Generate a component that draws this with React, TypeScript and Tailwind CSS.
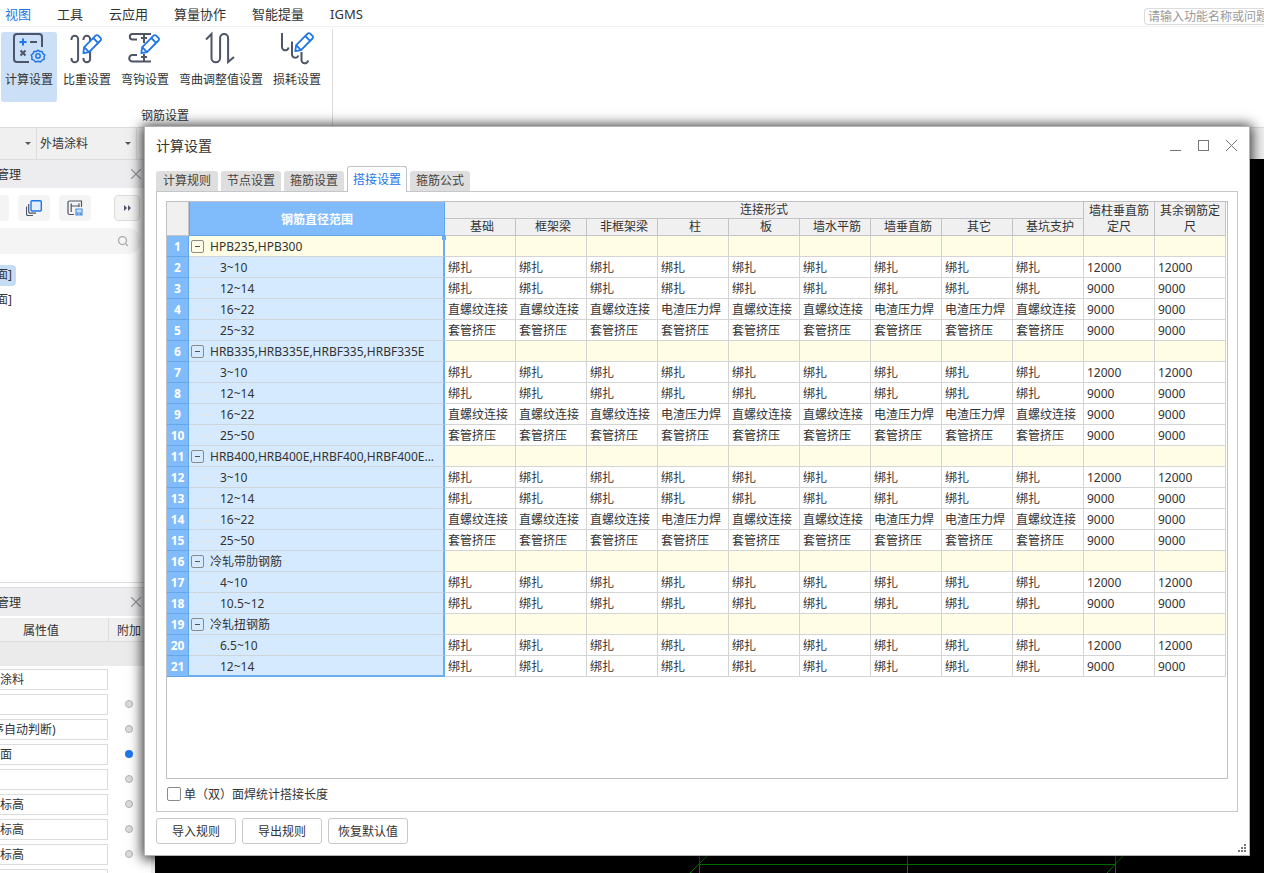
import React, { useState } from "react";
import { Search, X } from "lucide-react";
import clsx from "clsx";

const MENUS = ["视图", "工具", "云应用", "算量协作", "智能提量", "IGMS"];
const TABS = ["计算规则", "节点设置", "箍筋设置", "搭接设置", "箍筋公式"];
const COLUMNS = ["基础", "框架梁", "非框架梁", "柱", "板", "墙水平筋", "墙垂直筋", "其它", "基坑支护"];

const TIE = "绑扎";
const THREAD = "直螺纹连接";
const SLAG = "电渣压力焊";
const SLEEVE = "套管挤压";

const tied = Array(9).fill(TIE) as string[];
const sleeved = Array(9).fill(SLEEVE) as string[];
const mixed = [THREAD, THREAD, THREAD, SLAG, THREAD, THREAD, SLAG, SLAG, THREAD];

interface Row {
  name: string;
  group?: boolean;
  last?: boolean;
  joints?: string[];
  length?: string;
}

const ROWS: Row[] = [
  { name: "HPB235,HPB300", group: true },
  { name: "3~10", joints: tied, length: "12000" },
  { name: "12~14", joints: tied, length: "9000" },
  { name: "16~22", joints: mixed, length: "9000" },
  { name: "25~32", joints: sleeved, length: "9000", last: true },
  { name: "HRB335,HRB335E,HRBF335,HRBF335E", group: true },
  { name: "3~10", joints: tied, length: "12000" },
  { name: "12~14", joints: tied, length: "9000" },
  { name: "16~22", joints: mixed, length: "9000" },
  { name: "25~50", joints: sleeved, length: "9000", last: true },
  { name: "HRB400,HRB400E,HRBF400,HRBF400E...", group: true },
  { name: "3~10", joints: tied, length: "12000" },
  { name: "12~14", joints: tied, length: "9000" },
  { name: "16~22", joints: mixed, length: "9000" },
  { name: "25~50", joints: sleeved, length: "9000", last: true },
  { name: "冷轧带肋钢筋", group: true },
  { name: "4~10", joints: tied, length: "12000" },
  { name: "10.5~12", joints: tied, length: "9000", last: true },
  { name: "冷轧扭钢筋", group: true },
  { name: "6.5~10", joints: tied, length: "12000" },
  { name: "12~14", joints: tied, length: "9000", last: true },
];

const PROPS = [
  { value: "涂料" },
  { value: "", dot: "off" },
  { value: "序自动判断)", dot: "off", clipped: true },
  { value: "面", dot: "on" },
  { value: "", dot: "off" },
  { value: "标高", dot: "off" },
  { value: "标高", dot: "off" },
  { value: "标高", dot: "off" },
  { value: "", dot: "" },
];

function IconFrame({ children }: { children: React.ReactNode }) {
  return (
    <svg width="32" height="32" viewBox="0 0 32 32" fill="none" stroke="#4d5566" strokeWidth="2" className="overflow-visible" aria-hidden="true">
      {children}
    </svg>
  );
}

function Pencil({ transform }: { transform?: string }) {
  return (
    <g transform={transform} stroke="#1f76e8" strokeWidth="1.8" strokeLinejoin="round">
      <path d="M12.3 21.2l.9-6L24.6 3.6a1.8 1.8 0 0 1 2.600 0l2.300 2.300a1.8 1.8 0 0 1 0 2.600L18 20.200z" fill="#fff" />
      <path d="M22.300 6l4.800 4.800M13.200 15.200l4.800 5" />
    </g>
  );
}

const TOOLS = [
  {
    label: "计算设置",
    icon: (
      <IconFrame>
        <path d="M16 30H4a3 3 0 0 1-3-3V5a3 3 0 0 1 3-3h22a3 3 0 0 1 3 3v10" />
        <path d="M17 10h7" />
        <path d="M7.5 18.5l5 5M12.5 18.5l-5 5" />
        <path d="M10 6.5v7M6.5 10h7" stroke="#1f76e8" />
        <g stroke="#1f76e8" strokeWidth="1.5" strokeLinejoin="round">
          <path d="M25 18.2l1.8 1.4 2.3-.2.8 2.2 1.9 1.4-.8 2 .2 2.4-2.2.7-1.4 1.8-2.6-.6-2.6.6-1.4-1.8-2.2-.7.2-2.4-.8-2 1.9-1.4.8-2.2 2.3.2z" />
          <circle cx="25" cy="24" r="2.2" />
        </g>
      </IconFrame>
    ),
  },
  {
    label: "比重设置",
    icon: (
      <IconFrame>
        <path d="M.5 8V7a3.3 3.3 0 0 1 6.6 0v20a3.3 3.3 0 0 1-6.6 0v-1M12.500 8V7a3.3 3.3 0 0 1 6.600 0v20a3.3 3.3 0 0 1-6.600 0v-1" />
        <Pencil />
      </IconFrame>
    ),
  },
  {
    label: "弯钩设置",
    icon: (
      <IconFrame>
        <path d="M22 2H3.5a2.7 2.7 0 0 0 0 5.4H8M22 29.5H3.5a3.3 3.3 0 0 1 0-6.6H8M15 2v9M12 6h6M15 22v7.5M12 25h6" />
        <Pencil />
      </IconFrame>
    ),
  },
  {
    label: "弯曲调整值设置",
    icon: (
      <IconFrame>
        <path d="M1 7.5L6.500 2v24a4.300 4.300 0 0 0 8.600 0V6a4 4 0 0 1 8 0v24L29 25" />
      </IconFrame>
    ),
  },
  {
    label: "损耗设置",
    icon: (
      <IconFrame>
        <path d="M1 1v13.5a3.3 3.3 0 0 0 6.600 1M11 9.500v13a3.3 3.3 0 0 0 6.400 1M20.500 20v7.500a3.3 3.3 0 0 0 6.600 1" />
        <Pencil transform="translate(2 -2)" />
      </IconFrame>
    ),
  },
];

function PanelTitle({ title }: { title: string }) {
  return (
    <div className="flex h-7 items-center justify-between bg-[#ededf0] pr-1.5">
      <span className="-ml-[3px] pt-0.5">{title}</span>
      <button aria-label="关闭面板" className="text-[#999]">
        <X size={18} strokeWidth={1.5} />
      </button>
    </div>
  );
}

function Ribbon() {
  return (
    <header className="h-[127px] shrink-0">
      <div className="flex h-[27px] items-center justify-between border-b border-[#f0f0f0] pl-[5px]">
        <nav className="flex gap-[26px] pt-0.5 text-[13px] leading-5">
          {MENUS.map((m, i) => (
            <button key={m} className={i === 0 ? "text-[#1f76e8]" : ""}>{m}</button>
          ))}
        </nav>
        <input
          aria-label="搜索功能"
          placeholder="请输入功能名称或问题"
          className="mt-1.5 h-[17px] w-[120px] rounded-l-sm border border-r-0 border-[#dcdcdc] pl-[3px] placeholder:text-[#999]"
        />
      </div>
      <div className="mt-0.5 flex w-[333px] flex-col border-r border-[#dcdcdc] pt-[3px]">
        <div className="flex gap-0.5 pl-px">
          {TOOLS.map((t, i) => (
            <button key={t.label} className={clsx("flex h-[70px] flex-col items-center rounded-[3px] px-1", i === 0 && "bg-[#cbdff7]")}>
              {t.icon}
              <span className="mt-1.5 leading-5">{t.label}</span>
            </button>
          ))}
        </div>
        <div className="mt-1 pr-0.5 text-center leading-5">钢筋设置</div>
      </div>
    </header>
  );
}

function SidePanel() {
  return (
    <aside className="flex w-[155px] shrink-0 flex-col border-r-4 border-[#f0f0f0] bg-white">
      <div className="flex h-[33px] shrink-0 border-y border-[#dcdcdc] bg-[#f0f0f0]">
        <button aria-label="楼层" className="flex w-[37px] items-center justify-end border-r border-[#dcdcdc] pr-[5px]">
          <span className="border-x-3 border-t-3 border-x-transparent border-t-[#555]" />
        </button>
        <button className="flex w-[100px] items-center justify-between border-r border-[#dcdcdc] pr-[5px] pl-[3px]">
          外墙涂料
          <span className="border-x-3 border-t-3 border-x-transparent border-t-[#555]" />
        </button>
      </div>
      <PanelTitle title="管理" />
      <div className="flex h-10 items-center">
        <button aria-label="新建" className="h-[26px] w-[9px] rounded-r bg-[#f4f4f4]" />
        <button aria-label="复制" className="ml-[9px] flex h-[26px] w-8 items-center justify-center rounded bg-[#f4f4f4]">
          <svg width="16" height="16" viewBox="0 0 16 16" fill="none" aria-hidden="true">
            <path d="M.5 6.500V14a1.500 1.500 0 0 0 1.500 1.500h5M2.700 4v7.700a1.500 1.500 0 0 0 1.500 1.500H10" stroke="#4d5566" strokeWidth="1.200" />
            <rect x="5" y=".7" width="10.300" height="10.300" rx="1" fill="#e3effc" stroke="#1f76e8" strokeWidth="1.400" />
          </svg>
        </button>
        <button aria-label="构件存盘" className="ml-[9px] flex h-[26px] w-8 items-center justify-center rounded bg-[#f4f4f4]">
          <svg width="16" height="16" viewBox="0 0 16 16" fill="none" stroke="#4d5566" strokeWidth="1.200" aria-hidden="true">
            <path d="M7 14.500H2.500A1.500 1.500 0 0 1 1 13V2.500A1.500 1.500 0 0 1 2.500 1h12v6M4.200 3.500V12M4.200 6h8M12 3.500V7" />
            <path d="M9 9h6v6H9zM10.500 13h3v2h-3z" stroke="#4a8fe8" fill="#cfe1f8" />
          </svg>
        </button>
        <button aria-label="更多" className="ml-[23px] flex h-[26px] w-[26px] items-center justify-center gap-px rounded border border-[#dcdcdc] bg-[#f4f4f4]">
          <span className="border-y-3 border-l-3 border-y-transparent border-l-[#4d5566]" />
          <span className="border-y-3 border-l-3 border-y-transparent border-l-[#4d5566]" />
        </button>
      </div>
      <label className="flex h-[26px] w-[141px] shrink-0 items-center rounded-r-full bg-[#f4f4f4] pr-3">
        <input aria-label="搜索构件" className="min-w-0 flex-1 bg-transparent" />
        <Search size={12} strokeWidth={2.5} className="text-[#a8a8a8]" />
      </label>
      <ul className="flex flex-1 flex-col items-start gap-1 border-b border-[#dcdcdc] pt-[11px] -indent-1 leading-5">
        <li className="h-[21px] rounded-r bg-[#c5dcf5] pr-1">面]</li>
        <li className="h-[21px]">面]</li>
      </ul>
      <div className="mt-1 h-[286px] shrink-0 overflow-hidden border-t border-[#dcdcdc]">
        <PanelTitle title="管理" />
        <div className="mt-0.5 flex h-6 items-center border-b border-[#dcdcdc] bg-[#f0f0f0]">
          <span className="flex h-full w-[109px] items-center border-r border-[#dcdcdc] pt-0.5 pl-[23px]">属性值</span>
          <span className="pt-0.5 pl-2">附加</span>
        </div>
        <div className="h-6 bg-[#ebebeb]" />
        <div className="mt-[3px] flex flex-col gap-1">
          {PROPS.map((p, i) => (
            <div key={i} className="flex h-[21px] shrink-0 items-center">
              <input
                aria-label={`属性 ${i + 1}`}
                defaultValue={p.value}
                className={clsx("h-[21px] w-[108px] border border-l-0 border-[#dcdcdc] pb-0.5", p.clipped && "-indent-2")}
              />
              {p.dot && (
                <button
                  aria-label="附加属性"
                  className={clsx("mb-0.5 ml-[17px] size-2 rounded-full", p.dot === "on" ? "bg-[#1f76e8]" : "border border-[#b4b4b8] bg-[#dcdcdf]")}
                />
              )}
            </div>
          ))}
        </div>
      </div>
    </aside>
  );
}

function Viewport() {
  return (
    <main className="flex min-w-0 flex-1 flex-col overflow-hidden bg-black">
      <div className="h-8 border-t border-[#dcdcdc] bg-[#f0f0f0]" />
      <svg width="440" height="20" viewBox="0 0 440 20" className="mt-auto ml-[532px] shrink-0" stroke="#008000" aria-hidden="true">
        <path d="M12.500 0v20M220.500 0v20M428.500 0v20M12 11.500h417M3 20L22 1M420 20l18-19" fill="none" />
      </svg>
    </main>
  );
}

function NameCell({ row, active }: { row: Row; active: boolean }) {
  return (
    <td className={clsx("relative border-r-2 border-b border-r-[#6aaeee] border-b-[#cfd4da] p-0", active ? "bg-[#fffde6]" : "bg-[#d6eaff]")}>
      {row.group ? (
        <div className="flex items-center gap-1.5 pl-0.5">
          <button aria-label="折叠" className="flex size-[13px] items-center justify-center rounded-[2px] border border-[#8a8a8a]">
            <span className="h-px w-[5px] bg-[#555]" />
          </button>
          <span className="pt-0.5 whitespace-nowrap">{row.name}</span>
        </div>
      ) : (
        <div className="flex items-center pt-0.5 pl-2">
          <span className={clsx("relative w-[23px] before:absolute before:left-0 before:border-l before:border-dotted before:border-[#e4e4e4]", row.last ? "before:-top-2.5 before:h-2.5" : "before:-top-2.5 before:h-5")}>
            <span className="block w-4 border-t border-dotted border-[#e4e4e4]" />
          </span>
          {row.name}
        </div>
      )}
      {active && <span className="absolute top-0 -right-[3px] z-10 size-1 bg-[#6aaeee]" />}
    </td>
  );
}

function JointTable() {
  const head = "border-r border-b border-[#c4c4c8] bg-[#f0f0f0] p-0 font-normal";
  const cell = "border-r border-b border-[#d4d4d4] pt-0.5 pr-0 pb-0 pl-[3px] whitespace-nowrap";
  return (
    <table className="w-full table-fixed border-separate border-spacing-0 leading-4">
      <colgroup>
        <col className="w-[22px]" />
        <col className="w-64" />
        {Array.from({ length: 11 }, (_, i) => <col key={i} />)}
      </colgroup>
      <thead>
        <tr className="h-[17px]">
          <th rowSpan={2} className={head} aria-label="行号" />
          <th rowSpan={2} className="border border-t-0 border-[#64a6ea] bg-[#80bbfb] px-0 pt-0.5 pb-0 font-bold text-white">钢筋直径范围</th>
          <th colSpan={9} className={head}>连接形式</th>
          <th rowSpan={2} className={head}>墙柱垂直筋<br />定尺</th>
          <th rowSpan={2} className={head}>其余钢筋定<br />尺</th>
        </tr>
        <tr className="h-[17px]">
          {COLUMNS.map((c) => (
            <th key={c} className="border-r border-b border-[#c4c4c8] bg-[#f0f0f0] py-0 pr-0 pl-1 font-normal">{c}</th>
          ))}
        </tr>
      </thead>
      <tbody className="[&>tr:last-child>td:nth-child(2)]:border-b-2 [&>tr:last-child>td:nth-child(2)]:border-b-[#6aaeee]">
        {ROWS.map((row, i) => (
          <tr key={i} className="h-[21px]">
            <th className="border-r border-b border-[#64a6ea] bg-[#80bbfb] px-0 pt-0.5 pb-0 font-bold text-white">{i + 1}</th>
            <NameCell row={row} active={i === 0} />
            {COLUMNS.map((c, k) => (
              <td key={c} className={clsx(cell, row.group && "bg-[#fffde6]")}>{row.joints?.[k]}</td>
            ))}
            <td className={clsx(cell, row.group && "bg-[#fffde6]")}>{row.length}</td>
            <td className={clsx(cell, row.group && "bg-[#fffde6]")}>{row.length}</td>
          </tr>
        ))}
      </tbody>
    </table>
  );
}

function SettingsDialog() {
  const [tab, setTab] = useState("搭接设置");
  return (
    <section
      role="dialog"
      aria-label="计算设置"
      className="absolute top-[126px] right-3.5 bottom-[17px] left-36 flex flex-col border border-[#b4b4b4] bg-white px-[11px] pb-[11px] shadow-[0_1px_12px_2px_rgba(0,0,0,0.8)]"
    >
      <div className="flex h-[39px] shrink-0 items-center justify-between pb-0.5">
        <h2 className="text-sm">计算设置</h2>
        <div className="flex gap-[17px] pr-px text-[#777]">
          <button aria-label="最小化" className="flex size-[11px] items-end"><span className="h-px w-full bg-[#777]" /></button>
          <button aria-label="最大化" className="size-[11px] border border-[#777]" />
          <button aria-label="关闭">
            <svg width="11" height="11" viewBox="0 0 11 11" stroke="currentColor" aria-hidden="true"><path d="M0 0l11 11M11 0L0 11" /></svg>
          </button>
        </div>
      </div>
      <div role="tablist" className="flex shrink-0 items-end gap-[3px]">
        {TABS.map((t) => (
          <button
            key={t}
            role="tab"
            aria-selected={t === tab}
            onClick={() => setTab(t)}
            className={clsx(
              "w-[60px] rounded-t-[3px] first:w-[62px]",
              t === tab
                ? "relative z-10 -mb-px h-[26px] border border-b-0 border-[#c0c2c8] bg-white text-[#1f76e8]"
                : "h-5 bg-[#dedede] text-[#444]"
            )}
          >
            {t}
          </button>
        ))}
      </div>
      <div className="flex min-h-0 flex-1 flex-col border border-[#c4c6ca] px-[9px] pt-[9px]">
        <div className="min-h-0 flex-1 overflow-hidden border border-[#c0c0c4] pr-px">
          <JointTable />
        </div>
        <label className="flex h-8 shrink-0 items-center gap-[3px] pb-0.5 pl-px">
          <input type="checkbox" className="size-3.5 appearance-none rounded-[2px] border border-[#8a8a8a] bg-white checked:bg-[#1f76e8]" />
          {/* the TC face centres full-width brackets */}
          <span>
            单<span className="font-['Noto_Sans_CJK_TC',sans-serif]">（</span>双<span className="font-['Noto_Sans_CJK_TC',sans-serif]">）</span>面焊统计搭接长度
          </span>
        </label>
      </div>
      <div className="mt-1.5 flex gap-1.5">
        {["导入规则", "导出规则", "恢复默认值"].map((b) => (
          <button key={b} className="h-[26px] w-20 rounded-[3px] border border-[#c8c8c8] bg-white pt-0.5">{b}</button>
        ))}
      </div>
      <svg width="9" height="9" viewBox="0 0 9 9" fill="#777" className="absolute right-[3px] bottom-[3px]" aria-hidden="true">
        <path d="M7 1h2v2H7zM7 4h2v2H7zM4 4h2v2H4zM7 7h2v2H7zM4 7h2v2H4zM1 7h2v2H1z" />
      </svg>
    </section>
  );
}

export default function App() {
  return (
    <div className="relative flex h-screen flex-col overflow-hidden bg-white font-['Noto_Sans','Noto_Sans_CJK_SC',sans-serif] text-xs text-[#333]">
      <Ribbon />
      <div className="flex min-h-0 flex-1">
        <SidePanel />
        <Viewport />
      </div>
      <SettingsDialog />
    </div>
  );
}
